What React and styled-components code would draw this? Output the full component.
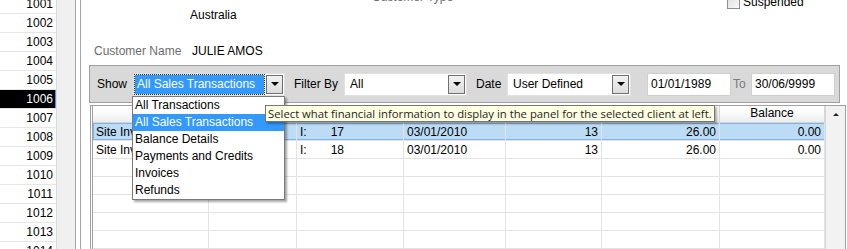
import React from 'react'
import styled, { createGlobalStyle } from 'styled-components'

const GlobalStyle = createGlobalStyle`
  html, body {
    margin:0;
    padding:0;
    background:#fff;
    overflow:hidden;
  }
  body {
    font-family:"Liberation Sans", Arial, sans-serif;
    font-size:12px;
    color:#000;
  }
`;

const Screen = styled.div`
    display:flex;
    width:847px;
    height:249px;
    overflow:hidden;
    background:#fff;
`;

const IdList = styled.div`
    width:56px;
    flex-shrink:0;
    border-right:1px solid #dcdcdc;
    overflow:hidden;
`;

const IdRows = styled.div`
    margin-top:-5px;
`;

const IdRow = styled.div`
    height:19px;
    box-sizing:border-box;
    border-bottom:1px solid #e6e6e6;
    display:flex;
    align-items:center;
    justify-content:flex-end;
    padding-right:3px;
    background:${p => p.$selected ? '#000' : '#fff'};
    color:${p => p.$selected ? '#fff' : '#000'};
    box-shadow:${p => p.$selected ? 'inset -1px 0 0 #3399ff' : 'none'};
`;

const Splitter = styled.div`
    display:flex;
    flex-shrink:0;
`;

const SplitStrip = styled.div`
    width:18px;
    background:#f0f0f0;
    border-right:1px solid #a5a5a5;
`;

const SplitGap = styled.div`
    width:4px;
    background:#fff;
    border-right:1px solid #a5a5a5;
`;

const Main = styled.div`
    flex:1;
    position:relative;
    display:flex;
    flex-direction:column;
    overflow:hidden;
    & > * {
        flex-shrink:0;
    }
`;

const TopRow = styled.div`
    display:grid;
    grid-template-columns:291px 355px auto;
    height:20px;
    margin-top:-12px;
`;

const MutedText = styled.span`
    color:#6d6d6d;
    line-height:14px;
    margin-top:${p => p.$mt || 0}px;
    white-space:nowrap;
`;

const CheckGroup = styled.label`
    display:flex;
    align-items:center;
    gap:3px;
    margin-top:${p => p.$mt || 0}px;
    height:14px;
    color:#000;
`;

const CheckBox = styled.span`
    width:11px;
    height:11px;
    border:1px solid #8e8f8f;
    background:linear-gradient(135deg, #dcdcdc, #fbfbfb);
`;

const InfoRow = styled.div`
    display:flex;
    line-height:14px;
    margin-top:${p => p.$mt || 0}px;
`;

const InfoLabel = styled.span`
    width:${p => p.$w}px;
    margin-left:${p => p.$ml || 0}px;
    color:${p => p.$muted ? '#6d6d6d' : '#000'};
    white-space:nowrap;
`;

const Toolbar = styled.div`
    margin:7px 0 0 8px;
    width:751px;
    height:38px;
    box-sizing:border-box;
    background:#d9d9d9;
    border:1px solid #a0a0a0;
    display:flex;
    align-items:center;
    padding-left:7px;
`;

const ToolLabel = styled.span`
    width:${p => p.$w}px;
    margin-left:${p => p.$ml || 0}px;
    color:${p => p.$muted ? '#7b7b7b' : '#000'};
    white-space:nowrap;
    flex-shrink:0;
`;

const Combo = styled.div`
    width:${p => p.$w}px;
    height:23px;
    box-sizing:border-box;
    flex-shrink:0;
    background:#fff;
    border:1px solid #e2e2e2;
    display:flex;
    align-items:center;
    padding:1px;
`;

const ComboText = styled.div`
    flex:1;
    height:100%;
    box-sizing:border-box;
    display:flex;
    align-items:center;
    padding-left:${p => p.$focus ? 2 : 4}px;
    background:${p => p.$focus ? '#3399ff' : 'transparent'};
    color:${p => p.$focus ? '#fff' : '#000'};
    outline:${p => p.$focus ? '1px dotted #3a2a10' : 'none'};
    white-space:nowrap;
`;

const ComboButton = styled.div`
    width:17px;
    height:19px;
    margin-left:2px;
    box-sizing:border-box;
    border:1px solid #707070;
    background:linear-gradient(#f2f2f2, #dcdcdc);
    display:flex;
    align-items:center;
    justify-content:center;
`;

const Arrow = styled.span`
    width:0;
    height:0;
    border-left:4px solid transparent;
    border-right:4px solid transparent;
    border-top:4px solid #000;
`;

const DateBox = styled.div`
    width:${p => p.$w}px;
    height:23px;
    margin-left:${p => p.$ml || 0}px;
    box-sizing:border-box;
    flex-shrink:0;
    background:#fff;
    border:1px solid #cfcfcf;
    display:flex;
    align-items:center;
    padding-left:3px;
`;

const GridFrame = styled.div`
    margin:2px 0 0 9px;
    width:756px;
    flex:1 0 auto;
    box-sizing:border-box;
    border:1px solid #a0a0a0;
    border-bottom:none;
    display:flex;
    padding-left:1px;
`;

const Table = styled.div`
    width:732px;
    border-left:1px solid #a0a0a0;
    display:flex;
    flex-direction:column;
`;

const HeaderRow = styled.div`
    display:flex;
    height:17px;
    box-sizing:border-box;
    border-bottom:1px solid #d5d5d5;
    background:linear-gradient(#ffffff, #fbfbfb 45%, #ececec);
`;

const HeaderCell = styled.div`
    width:${p => p.$w}px;
    box-sizing:border-box;
    border-right:1px solid #d5d5d5;
    text-align:center;
    line-height:15px;
    color:#000;
`;

const Row = styled.div`
    display:flex;
    height:18px;
    box-sizing:border-box;
    border-bottom:1px solid #e3e3e3;
    background:${p => p.$selected ? '#bcdcf6' : '#fff'};
    box-shadow:${p => p.$selected ? 'inset 0 0 0 1px #7db4ea' : 'none'};
`;

const Cell = styled.div`
    width:${p => p.$w}px;
    box-sizing:border-box;
    border-right:1px solid #e3e3e3;
    display:flex;
    align-items:center;
    justify-content:${p => p.$right ? 'flex-end' : 'flex-start'};
    padding:0 3px;
    white-space:nowrap;
    overflow:hidden;
`;

const Gap = styled.span`
    margin-left:${p => p.$w}px;
`;

const ScrollBar = styled.div`
    flex:1;
    background:#f2f2f2;
    border-left:1px solid #d8d8d8;
`;

const ScrollUp = styled.div`
    height:17px;
    display:flex;
    align-items:center;
    justify-content:center;
`;

const UpArrow = styled.span`
    width:0;
    height:0;
    border-left:3px solid transparent;
    border-right:3px solid transparent;
    border-bottom:3px solid #222;
`;

const DropList = styled.div`
    position:absolute;
    left:51px;
    top:96px;
    width:153px;
    box-sizing:border-box;
    background:#fff;
    border:1px solid #7a7a7a;
    box-shadow:2px 2px 2px rgba(0,0,0,0.35);
    z-index:2;
`;

const DropItem = styled.div`
    height:17px;
    line-height:17px;
    padding-left:2px;
    background:${p => p.$active ? '#3399ff' : '#fff'};
    color:${p => p.$active ? '#fff' : '#000'};
    white-space:nowrap;
`;

const Tooltip = styled.div`
    position:absolute;
    left:184px;
    top:105px;
    height:17px;
    box-sizing:border-box;
    padding:0 2px;
    background:#ffffe1;
    border:1px solid #767676;
    box-shadow:2px 2px 2px rgba(0,0,0,0.3);
    font-family:"Open Sans", "Noto Sans", sans-serif;
    font-size:11.3px;
    line-height:15px;
    color:#1e1e1e;
    white-space:nowrap;
    z-index:3;
`;

const ids = [1001, 1002, 1003, 1004, 1005, 1006, 1007, 1008, 1009, 1010, 1011, 1012, 1013, 1014];

// only the Balance header shows, the rest sit under the dropdown and tooltip
const cols = [116, 88, 107, 102, 96, 118, 105];
const headers = ['', '', '', '', '', '', 'Balance'];

const rows = [
    { type: 'Site Invoice', no: '17', date: '03/01/2010', qty: '13', amount: '26.00', balance: '0.00' },
    { type: 'Site Invoice', no: '18', date: '03/01/2010', qty: '13', amount: '26.00', balance: '0.00' },
];

const options = ['All Transactions', 'All Sales Transactions', 'Balance Details', 'Payments and Credits', 'Invoices', 'Refunds'];

const App = () => {
    const blanks = Array.from({ length: 6 });

    return (
        <Screen>
            <GlobalStyle />
            <IdList>
                <IdRows>
                    {ids.map(id => (
                        <IdRow key={id} $selected={id === 1006}>{id}</IdRow>
                    ))}
                </IdRows>
            </IdList>
            <Splitter>
                <SplitStrip />
                <SplitGap />
            </Splitter>
            <Main>
                <TopRow>
                    <span />
                    <MutedText $mt={2}>Customer Type</MutedText>
                    <CheckGroup $mt={7}>
                        <CheckBox />
                        Suspended
                    </CheckGroup>
                </TopRow>
                <InfoRow>
                    <InfoLabel $w={120} $ml={109}>Australia</InfoLabel>
                </InfoRow>
                <InfoRow $mt={22}>
                    <InfoLabel $w={98} $ml={13} $muted>Customer Name</InfoLabel>
                    <InfoLabel $w={120}>JULIE AMOS</InfoLabel>
                </InfoRow>
                <Toolbar>
                    <ToolLabel $w={36}>Show</ToolLabel>
                    <Combo $w={152}>
                        <ComboText $focus>All Sales Transactions</ComboText>
                        <ComboButton><Arrow /></ComboButton>
                    </Combo>
                    <ToolLabel $w={50} $ml={9}>Filter By</ToolLabel>
                    <Combo $w={123}>
                        <ComboText>All</ComboText>
                        <ComboButton><Arrow /></ComboButton>
                    </Combo>
                    <ToolLabel $w={31} $ml={9}>Date</ToolLabel>
                    <Combo $w={124}>
                        <ComboText>User Defined</ComboText>
                        <ComboButton><Arrow /></ComboButton>
                    </Combo>
                    <DateBox $w={84} $ml={16}>01/01/1989</DateBox>
                    <ToolLabel $w={18} $ml={2} $muted>To</ToolLabel>
                    <DateBox $w={84}>30/06/9999</DateBox>
                </Toolbar>
                <GridFrame>
                    <Table>
                        <HeaderRow>
                            {cols.map((w, i) => (
                                <HeaderCell key={i} $w={w}>{headers[i]}</HeaderCell>
                            ))}
                        </HeaderRow>
                        {rows.map((r, i) => (
                            <Row key={i} $selected={i === 0}>
                                <Cell $w={cols[0]}>{r.type}</Cell>
                                <Cell $w={cols[1]} />
                                <Cell $w={cols[2]}>I:<Gap $w={24}>{r.no}</Gap></Cell>
                                <Cell $w={cols[3]}>{r.date}</Cell>
                                <Cell $w={cols[4]} $right>{r.qty}</Cell>
                                <Cell $w={cols[5]} $right>{r.amount}</Cell>
                                <Cell $w={cols[6]} $right>{r.balance}</Cell>
                            </Row>
                        ))}
                        {blanks.map((_, i) => (
                            <Row key={'b' + i}>
                                {cols.map((w, j) => <Cell key={j} $w={w} />)}
                            </Row>
                        ))}
                    </Table>
                    <ScrollBar>
                        <ScrollUp><UpArrow /></ScrollUp>
                    </ScrollBar>
                </GridFrame>
                <DropList>
                    {options.map(o => (
                        <DropItem key={o} $active={o === 'All Sales Transactions'}>{o}</DropItem>
                    ))}
                </DropList>
                <Tooltip>Select what financial information to display in the panel for the selected client at left.</Tooltip>
            </Main>
        </Screen>
    )
}

export default App
